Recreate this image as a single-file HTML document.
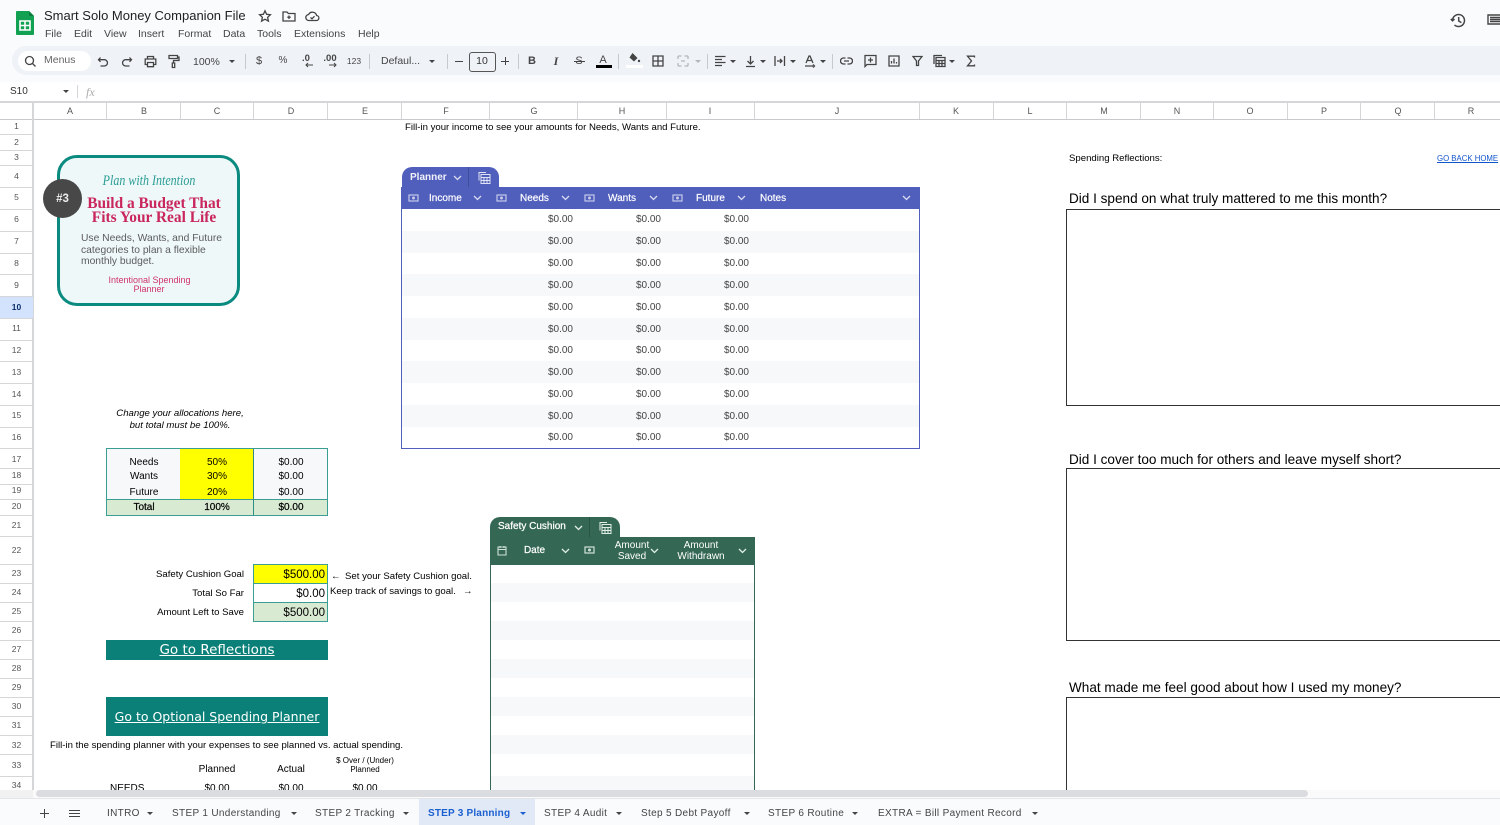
<!DOCTYPE html>
<html><head><meta charset="utf-8"><title>Smart Solo Money Companion File</title>
<style>
html,body{margin:0;padding:0;background:#fff}
body{width:1500px;height:825px;overflow:hidden;position:relative;font-family:"Liberation Sans",Arial,sans-serif;color:#000;filter:blur(.25px)}
div,span.a,svg{position:absolute}
.t{white-space:nowrap;line-height:14px;font-size:9.6px;transform:translateY(-6px)}
.c{white-space:nowrap;line-height:14px;font-size:10px;transform:translate(-50%,-6px);text-align:center}
.r{white-space:nowrap;line-height:14px;font-size:9.6px;transform:translate(-100%,-6px)}
.m{font-size:10.5px;color:#444}
.h{font-size:9px;color:#555}
.n{font-size:8.5px;color:#555;left:0;width:33px;text-align:center;line-height:12px;transform:translateY(-6px)}
.v{background:#d4d6d8;width:1px;top:103px;height:16px}
.rl{background:#d4d6d8;left:0;width:33px;height:1px}
.d{color:#444;font-size:10px}
.hd{color:#fff;font-weight:bold;font-size:10px;opacity:.92}
.sep{width:1px;height:15px;top:54px;background:#c7c9cc}
.car{width:0;height:0;border-left:3.5px solid transparent;border-right:3.5px solid transparent;border-top:3.5px solid #444}
.tb{font-size:10px;color:#444;letter-spacing:.33px}
.ic{fill:none;stroke:#444;stroke-width:1.3}
.cv{fill:none;stroke:#d8dcf0;stroke-width:1.3}
</style></head><body>

<!-- top chrome -->
<div style="left:0;top:0;width:1500px;height:82px;background:#f9fbfd"></div>
<div style="left:12px;top:46px;width:1488px;height:29px;background:#eff3f8;border-radius:14px 0 0 14px"></div>

<svg style="left:15px;top:10px" width="20" height="26" viewBox="0 0 20 26"><path d="M2 1h12l5 5v18a1 1 0 0 1-1 1H2a1 1 0 0 1-1-1V2a1 1 0 0 1 1-1z" fill="#12a152"/><path d="M14 1l5 5h-5z" fill="#0b7d3e"/><path d="M5 11h10v9H5zM5 15.5h10M10 11v9" fill="none" stroke="#fff" stroke-width="1.6"/></svg>
<div class="t" style="left:44px;top:16px;font-size:13px;line-height:16px;transform:translateY(-8px);color:#222">Smart Solo Money Companion File</div>
<svg style="left:258px;top:9px" width="14" height="14" viewBox="0 0 14 14"><path class="ic" d="M7 1.8l1.6 3.5 3.8.4-2.8 2.6.8 3.8L7 10.2l-3.4 1.9.8-3.8L1.6 5.7l3.8-.4z"/></svg>
<svg style="left:282px;top:10px" width="14" height="12" viewBox="0 0 14 12"><path class="ic" d="M1 2h4l1.3 1.5H13V11H1zM7 5.5v3.5M5.3 7.2h3.4"/></svg>
<svg style="left:305px;top:10px" width="15" height="12" viewBox="0 0 15 12"><path class="ic" d="M4 10.5a3 3 0 0 1-.4-6 4.3 4.3 0 0 1 8 1 2.5 2.5 0 0 1-.4 5zM5.5 7.5l1.5 1.3 2.5-2.6"/></svg>

<div class="t m" style="left:45px;top:33px">File</div>
<div class="t m" style="left:74px;top:33px">Edit</div>
<div class="t m" style="left:104px;top:33px">View</div>
<div class="t m" style="left:138px;top:33px">Insert</div>
<div class="t m" style="left:178px;top:33px">Format</div>
<div class="t m" style="left:223px;top:33px">Data</div>
<div class="t m" style="left:257px;top:33px">Tools</div>
<div class="t m" style="left:294px;top:33px">Extensions</div>
<div class="t m" style="left:358px;top:33px">Help</div>

<svg style="left:1450px;top:12px" width="17" height="17" viewBox="0 0 17 17"><path d="M2.5 8.5a6 6 0 1 1 2 4.5M.8 6.8l1.7 2 2-1.7M8.7 5v4l2.7 1.6" fill="none" stroke="#444" stroke-width="1.5"/></svg>
<svg style="left:1487px;top:13px" width="13" height="14" viewBox="0 0 13 14"><path d="M1 2h14v9H1zM3 4.5h10M3 6.5h10M3 8.5h10" fill="none" stroke="#444" stroke-width="1.4"/></svg>

<!-- toolbar -->
<div style="left:18px;top:51px;width:73px;height:20px;background:#fff;border-radius:10px"></div>
<svg style="left:24px;top:55px" width="13" height="13" viewBox="0 0 13 13"><path d="M5.5 1.5a4 4 0 1 0 0 8 4 4 0 0 0 0-8zM8.5 8.5l3 3" fill="none" stroke="#444" stroke-width="1.3"/></svg>
<div class="t" style="left:44px;top:59px;font-size:10.5px;color:#666">Menus</div>
<svg style="left:97px;top:56px" width="12" height="12" viewBox="0 0 12 12"><path class="ic" d="M3.5 1.5L1.5 3.7l2 2.1M1.7 3.7h5.6a3 3 0 0 1 0 6.3H3.5"/></svg>
<svg style="left:121px;top:56px" width="12" height="12" viewBox="0 0 12 12"><path class="ic" d="M8.5 1.5l2 2.2-2 2.1M10.3 3.7H4.7a3 3 0 0 0 0 6.3h3.8"/></svg>
<svg style="left:144px;top:55px" width="13" height="13" viewBox="0 0 13 13"><path class="ic" d="M3.5 4V1.5h6V4M3.5 9.5H1.2V4h10.6v5.500H9.500M3.500 7.500h6v4.200h-6z"/></svg>
<svg style="left:168px;top:54px" width="12" height="15" viewBox="0 0 12 15"><path class="ic" d="M1 1.500h8.500v3H1zM9.500 3H11v3.500H5.500V9M4.300 9h2.400v4.500H4.300z"/></svg>
<div class="t" style="left:193px;top:61px;font-size:10.5px;color:#444">100%</div>
<div class="car" style="left:229px;top:60px"></div>
<div class="sep" style="left:245px"></div>
<div class="c" style="left:259px;top:60px;font-size:11px;color:#444">$</div>
<div class="c" style="left:283px;top:60px;font-size:10px;color:#444">%</div>
<div class="c" style="left:306px;top:58px;font-size:9.5px;color:#444;font-weight:bold">.0</div>
<svg style="left:304px;top:62px" width="10" height="6" viewBox="0 0 10 6"><path d="M9 3H2M4 1L2 3l2 2" fill="none" stroke="#444" stroke-width="1"/></svg>
<div class="c" style="left:330px;top:58px;font-size:9.5px;color:#444;font-weight:bold">.00</div>
<svg style="left:328px;top:62px" width="10" height="6" viewBox="0 0 10 6"><path d="M1 3h7M6 1l2 2-2 2" fill="none" stroke="#444" stroke-width="1"/></svg>
<div class="c" style="left:354px;top:60px;font-size:8.5px;color:#444">123</div>
<div class="sep" style="left:369px"></div>
<div class="t" style="left:381px;top:60px;font-size:10.5px;color:#444">Defaul...</div>
<div class="car" style="left:429px;top:60px"></div>
<div class="sep" style="left:447px"></div>
<div style="left:455px;top:61px;width:8px;height:1px;background:#444"></div>
<div style="left:469px;top:52px;width:25px;height:18px;border:1px solid #555;border-radius:3px;box-sizing:content-box"></div>
<div class="c" style="left:482px;top:60px;font-size:10.5px;color:#333">10</div>
<div style="left:501px;top:61px;width:8px;height:1px;background:#444"></div>
<div style="left:505px;top:57px;width:1px;height:8px;background:#444"></div>
<div class="sep" style="left:518px"></div>
<div class="c" style="left:532px;top:60px;font-size:11px;font-weight:bold;color:#444">B</div>
<div class="c" style="left:556px;top:60px;font-size:12px;font-style:italic;font-family:'Liberation Serif',serif;font-weight:bold;color:#444">I</div>
<div class="c" style="left:579px;top:60px;font-size:11px;color:#444">S</div>
<div style="left:574px;top:61px;width:11px;height:1px;background:#444"></div>
<div class="c" style="left:603px;top:59px;font-size:11px;color:#444">A</div>
<div style="left:596px;top:65px;width:16px;height:3px;background:#000"></div>
<div class="sep" style="left:618px"></div>
<svg style="left:627px;top:52px" width="14" height="13" viewBox="0 0 14 13"><path d="M5.500 1l5 5-3.500 3.500L2.500 5.500z" fill="#444"/><circle cx="12" cy="9" r="1.200" fill="#444"/></svg>
<div style="left:626px;top:65px;width:17px;height:3px;background:#fff"></div>
<svg style="left:652px;top:55px" width="12" height="12" viewBox="0 0 12 12"><path class="ic" d="M1 1h10v10H1zM6 1v10M1 6h10"/></svg>
<svg style="left:677px;top:55px" width="12" height="12" viewBox="0 0 12 12"><path d="M1 1v3M1 8v3M11 1v3M11 8v3M1 1h3.500M1 11h3.500M7.500 1H11M7.500 11H11M4 6h4" fill="none" stroke="#b5b8bb" stroke-width="1.300"/></svg>
<div class="car" style="left:695px;top:60px;border-top-color:#b5b8bb"></div>
<div class="sep" style="left:707px"></div>
<svg style="left:714px;top:55px" width="12" height="12" viewBox="0 0 12 12"><path class="ic" d="M1 1.500h10.500M1 4.500h7M1 7.500h10.500M1 10.500h7"/></svg>
<div class="car" style="left:730px;top:60px"></div>
<svg style="left:745px;top:55px" width="11" height="13" viewBox="0 0 11 13"><path class="ic" d="M5.500 1v8M2.500 6l3 3 3-3M1 11.500h9"/></svg>
<div class="car" style="left:760px;top:60px"></div>
<svg style="left:774px;top:55px" width="12" height="12" viewBox="0 0 12 12"><path class="ic" d="M1 1v10M10.500 1v10M3 6h5M6 4l2 2-2 2"/></svg>
<div class="car" style="left:790px;top:60px"></div>
<svg style="left:804px;top:55px" width="12" height="13" viewBox="0 0 12 13"><path class="ic" d="M2 8l3-7h1l3 7M3.200 5.500h4.600M1 11h8M9 9.500l1.500 1.500L9 12.500"/></svg>
<div class="car" style="left:820px;top:60px"></div>
<div class="sep" style="left:832px"></div>
<svg style="left:840px;top:56px" width="13" height="10" viewBox="0 0 13 10"><path class="ic" d="M5.500 2H3.500a3 3 0 0 0 0 6h2M7.500 2h2a3 3 0 0 1 0 6h-2M4 5h5"/></svg>
<svg style="left:864px;top:54px" width="13" height="14" viewBox="0 0 13 14"><path class="ic" d="M1 1.500h11v9H3l-2 2zM6.500 3.500v5M4 6h5"/></svg>
<svg style="left:888px;top:55px" width="12" height="12" viewBox="0 0 12 12"><path class="ic" d="M1 1h10v10H1zM3.500 8.500V6M6 8.500V3.500M8.500 8.500V7"/></svg>
<svg style="left:912px;top:55px" width="11" height="12" viewBox="0 0 11 12"><path class="ic" d="M1 1.500h9L6.500 6v4.500h-2V6z"/></svg>
<svg style="left:933px;top:54px" width="13" height="14" viewBox="0 0 13 14"><path class="ic" d="M1 10V1.500h8M3 3.500h9v9H3zM3 6.500h9M6 6.500v6M9 6.500v6M3 9.500h9"/></svg>
<div class="car" style="left:949px;top:60px"></div>
<svg style="left:966px;top:55px" width="10" height="12" viewBox="0 0 10 12"><path class="ic" d="M8.500 2.500V1.200H1.500L5.500 6l-4 4.800h7V9.500" stroke-width="1.500"/></svg>

<!-- formula bar -->
<div class="t" style="left:10px;top:91px;font-size:10px;color:#333">S10</div>
<div class="car" style="left:63px;top:90px"></div>
<div style="left:77px;top:85px;width:1px;height:13px;background:#d4d6d8"></div>
<div class="t" style="left:86px;top:91px;font-size:12px;font-style:italic;color:#aaa;font-family:'Liberation Serif',serif">fx</div>

<!-- column header -->
<div style="left:0;top:101px;width:1500px;height:2px;background:#d4d6d8"></div>
<div style="left:0;top:119px;width:1500px;height:1px;background:#c7c9cc"></div>
<div style="left:32px;top:103px;width:2px;height:687px;background:#d4d6d8"></div>
<div class="v" style="left:106px"></div><div class="c h" style="left:70px;top:110px">A</div>
<div class="v" style="left:180px"></div><div class="c h" style="left:144px;top:110px">B</div>
<div class="v" style="left:253px"></div><div class="c h" style="left:217px;top:110px">C</div>
<div class="v" style="left:327px"></div><div class="c h" style="left:291px;top:110px">D</div>
<div class="v" style="left:401px"></div><div class="c h" style="left:365px;top:110px">E</div>
<div class="v" style="left:489px"></div><div class="c h" style="left:446px;top:110px">F</div>
<div class="v" style="left:577px"></div><div class="c h" style="left:534px;top:110px">G</div>
<div class="v" style="left:666px"></div><div class="c h" style="left:622px;top:110px">H</div>
<div class="v" style="left:754px"></div><div class="c h" style="left:710px;top:110px">I</div>
<div class="v" style="left:919px"></div><div class="c h" style="left:837px;top:110px">J</div>
<div class="v" style="left:993px"></div><div class="c h" style="left:956px;top:110px">K</div>
<div class="v" style="left:1066px"></div><div class="c h" style="left:1030px;top:110px">L</div>
<div class="v" style="left:1140px"></div><div class="c h" style="left:1104px;top:110px">M</div>
<div class="v" style="left:1213px"></div><div class="c h" style="left:1177px;top:110px">N</div>
<div class="v" style="left:1287px"></div><div class="c h" style="left:1250px;top:110px">O</div>
<div class="v" style="left:1360px"></div><div class="c h" style="left:1324px;top:110px">P</div>
<div class="v" style="left:1434px"></div><div class="c h" style="left:1398px;top:110px">Q</div>
<div class="c h" style="left:1471px;top:110px">R</div>

<!-- row header -->
<div style="left:0;top:296px;width:33px;height:22px;background:#d3e3fd"></div>
<div class="rl" style="top:134px"></div><div class="n" style="top:126px">1</div>
<div class="rl" style="top:150px"></div><div class="n" style="top:142px">2</div>
<div class="rl" style="top:165px"></div><div class="n" style="top:157px">3</div>
<div class="rl" style="top:187px"></div><div class="n" style="top:176px">4</div>
<div class="rl" style="top:209px"></div><div class="n" style="top:197px">5</div>
<div class="rl" style="top:231px"></div><div class="n" style="top:219px">6</div>
<div class="rl" style="top:253px"></div><div class="n" style="top:241px">7</div>
<div class="rl" style="top:274px"></div><div class="n" style="top:263px">8</div>
<div class="rl" style="top:296px"></div><div class="n" style="top:285px">9</div>
<div class="rl" style="top:318px"></div><div class="n" style="top:307px;font-weight:bold;color:#0b2f6b">10</div>
<div class="rl" style="top:340px"></div><div class="n" style="top:328px">11</div>
<div class="rl" style="top:361px"></div><div class="n" style="top:350px">12</div>
<div class="rl" style="top:383px"></div><div class="n" style="top:372px">13</div>
<div class="rl" style="top:405px"></div><div class="n" style="top:394px">14</div>
<div class="rl" style="top:427px"></div><div class="n" style="top:415px">15</div>
<div class="rl" style="top:448px"></div><div class="n" style="top:437px">16</div>
<div class="rl" style="top:468px"></div><div class="n" style="top:459px">17</div>
<div class="rl" style="top:484px"></div><div class="n" style="top:475px">18</div>
<div class="rl" style="top:499px"></div><div class="n" style="top:490px">19</div>
<div class="rl" style="top:515px"></div><div class="n" style="top:506px">20</div>
<div class="rl" style="top:536px"></div><div class="n" style="top:525px">21</div>
<div class="rl" style="top:564px"></div><div class="n" style="top:550px">22</div>
<div class="rl" style="top:583px"></div><div class="n" style="top:573px">23</div>
<div class="rl" style="top:602px"></div><div class="n" style="top:592px">24</div>
<div class="rl" style="top:621px"></div><div class="n" style="top:611px">25</div>
<div class="rl" style="top:640px"></div><div class="n" style="top:630px">26</div>
<div class="rl" style="top:659px"></div><div class="n" style="top:649px">27</div>
<div class="rl" style="top:678px"></div><div class="n" style="top:668px">28</div>
<div class="rl" style="top:697px"></div><div class="n" style="top:687px">29</div>
<div class="rl" style="top:716px"></div><div class="n" style="top:706px">30</div>
<div class="rl" style="top:735px"></div><div class="n" style="top:725px">31</div>
<div class="rl" style="top:754px"></div><div class="n" style="top:745px">32</div>
<div class="rl" style="top:776px"></div><div class="n" style="top:765px">33</div>
<div class="n" style="top:785px">34</div>

<!-- sheet text -->
<div class="t" style="left:405px;top:127px">Fill-in your income to see your amounts for Needs, Wants and Future.</div>

<!-- card -->
<div style="left:57px;top:155px;width:183px;height:151px;box-sizing:border-box;background:#eef8f9;border:3px solid #0b8a80;border-radius:20px"></div>
<div class="c" style="left:149px;top:179px;font-family:'Liberation Serif',serif;font-style:italic;font-size:12px;color:#2a9d94;transform:translate(-50%,-6px) scaleY(1.25)">Plan with Intention</div>
<div style="left:43px;top:179px;width:39px;height:39px;border-radius:50%;background:#484848"></div>
<div class="c" style="left:62.500px;top:198px;font-size:11.500px;font-weight:bold;color:#eee">#3</div>
<div class="c" style="left:154px;top:203px;font-family:'Liberation Serif',serif;font-weight:bold;font-size:15.400px;color:#c9265c">Build a Budget That</div>
<div class="c" style="left:154px;top:217px;font-family:'Liberation Serif',serif;font-weight:bold;font-size:15.400px;color:#c9265c">Fits Your Real Life</div>
<div class="t" style="left:81px;top:238px;font-size:10.300px;color:#5c5c5c">Use Needs, Wants, and Future</div>
<div class="t" style="left:81px;top:250px;font-size:10.300px;color:#5c5c5c">categories to plan a flexible</div>
<div class="t" style="left:81px;top:261px;font-size:10.300px;color:#5c5c5c">monthly budget.</div>
<div class="c" style="left:149.500px;top:279px;font-size:9px;color:#d0336a">Intentional Spending</div>
<div class="c" style="left:149px;top:288px;font-size:9px;color:#d0336a">Planner</div>

<!-- Planner table -->
<div style="left:401px;top:187px;width:519px;height:262px;box-sizing:border-box;border:1px solid #515fbc;background:#fff"></div>
<div style="left:402px;top:231px;width:517px;height:22px;background:#f6f8f9"></div>
<div style="left:402px;top:274px;width:517px;height:22px;background:#f6f8f9"></div>
<div style="left:402px;top:318px;width:517px;height:22px;background:#f6f8f9"></div>
<div style="left:402px;top:361px;width:517px;height:22px;background:#f6f8f9"></div>
<div style="left:402px;top:405px;width:517px;height:22px;background:#f6f8f9"></div>
<div style="left:402px;top:167px;width:97px;height:21px;background:#515fbc;border-radius:10px 10px 0 0"></div>
<div style="left:468px;top:167px;width:1px;height:20px;background:#414e9e"></div>
<div style="left:401px;top:187px;width:519px;height:22px;background:#515fbc"></div>
<div class="t hd" style="left:410px;top:177px">Planner</div>
<svg style="left:453px;top:175px" width="9" height="6" viewBox="0 0 9 6"><path class="cv" d="M1 1l3.500 3.500L8 1"/></svg>
<svg style="left:478px;top:171px" width="13" height="13" viewBox="0 0 13 13"><path d="M1 9.500V1.500h7M3 3.500h9v9H3zM3 6.500h9M6 6.500v6M9 6.500v6M3 9.500h9" fill="none" stroke="#dfe2f4" stroke-width="1"/></svg>
<svg style="left:408px;top:194px" width="11" height="8" viewBox="0 0 11 8"><rect x="1" y="1" width="9" height="6" fill="none" stroke="#c5cae9" stroke-width="1.200"/><circle cx="5.500" cy="4" r="1.500" fill="#c5cae9"/></svg>
<div class="t hd" style="left:429px;top:198px;font-weight:normal;opacity:1;-webkit-text-stroke:.2px #fff">Income</div>
<svg style="left:473px;top:195px" width="9" height="6" viewBox="0 0 9 6"><path class="cv" d="M1 1l3.500 3.500L8 1"/></svg>
<svg style="left:496px;top:194px" width="11" height="8" viewBox="0 0 11 8"><rect x="1" y="1" width="9" height="6" fill="none" stroke="#c5cae9" stroke-width="1.200"/><circle cx="5.500" cy="4" r="1.500" fill="#c5cae9"/></svg>
<div class="t hd" style="left:520px;top:198px;font-weight:normal;opacity:1;-webkit-text-stroke:.2px #fff">Needs</div>
<svg style="left:561px;top:195px" width="9" height="6" viewBox="0 0 9 6"><path class="cv" d="M1 1l3.500 3.500L8 1"/></svg>
<svg style="left:584px;top:194px" width="11" height="8" viewBox="0 0 11 8"><rect x="1" y="1" width="9" height="6" fill="none" stroke="#c5cae9" stroke-width="1.200"/><circle cx="5.500" cy="4" r="1.500" fill="#c5cae9"/></svg>
<div class="t hd" style="left:608px;top:198px;font-weight:normal;opacity:1;-webkit-text-stroke:.2px #fff">Wants</div>
<svg style="left:649px;top:195px" width="9" height="6" viewBox="0 0 9 6"><path class="cv" d="M1 1l3.500 3.500L8 1"/></svg>
<svg style="left:672px;top:194px" width="11" height="8" viewBox="0 0 11 8"><rect x="1" y="1" width="9" height="6" fill="none" stroke="#c5cae9" stroke-width="1.200"/><circle cx="5.500" cy="4" r="1.500" fill="#c5cae9"/></svg>
<div class="t hd" style="left:696px;top:198px;font-weight:normal;opacity:1;-webkit-text-stroke:.2px #fff">Future</div>
<svg style="left:737px;top:195px" width="9" height="6" viewBox="0 0 9 6"><path class="cv" d="M1 1l3.500 3.500L8 1"/></svg>
<div class="t hd" style="left:760px;top:198px;font-weight:normal;opacity:1;-webkit-text-stroke:.2px #fff">Notes</div>
<svg style="left:902px;top:195px" width="9" height="6" viewBox="0 0 9 6"><path class="cv" d="M1 1l3.500 3.500L8 1"/></svg>

<div class="r d" style="left:573px;top:219px">$0.00</div><div class="r d" style="left:661px;top:219px">$0.00</div><div class="r d" style="left:749px;top:219px">$0.00</div>
<div class="r d" style="left:573px;top:241px">$0.00</div><div class="r d" style="left:661px;top:241px">$0.00</div><div class="r d" style="left:749px;top:241px">$0.00</div>
<div class="r d" style="left:573px;top:263px">$0.00</div><div class="r d" style="left:661px;top:263px">$0.00</div><div class="r d" style="left:749px;top:263px">$0.00</div>
<div class="r d" style="left:573px;top:285px">$0.00</div><div class="r d" style="left:661px;top:285px">$0.00</div><div class="r d" style="left:749px;top:285px">$0.00</div>
<div class="r d" style="left:573px;top:307px">$0.00</div><div class="r d" style="left:661px;top:307px">$0.00</div><div class="r d" style="left:749px;top:307px">$0.00</div>
<div class="r d" style="left:573px;top:329px">$0.00</div><div class="r d" style="left:661px;top:329px">$0.00</div><div class="r d" style="left:749px;top:329px">$0.00</div>
<div class="r d" style="left:573px;top:350px">$0.00</div><div class="r d" style="left:661px;top:350px">$0.00</div><div class="r d" style="left:749px;top:350px">$0.00</div>
<div class="r d" style="left:573px;top:372px">$0.00</div><div class="r d" style="left:661px;top:372px">$0.00</div><div class="r d" style="left:749px;top:372px">$0.00</div>
<div class="r d" style="left:573px;top:394px">$0.00</div><div class="r d" style="left:661px;top:394px">$0.00</div><div class="r d" style="left:749px;top:394px">$0.00</div>
<div class="r d" style="left:573px;top:416px">$0.00</div><div class="r d" style="left:661px;top:416px">$0.00</div><div class="r d" style="left:749px;top:416px">$0.00</div>
<div class="r d" style="left:573px;top:437px">$0.00</div><div class="r d" style="left:661px;top:437px">$0.00</div><div class="r d" style="left:749px;top:437px">$0.00</div>

<!-- Allocation -->
<div class="c" style="left:180px;top:413px;font-style:italic;font-size:9.6px">Change your allocations here,</div>
<div class="c" style="left:180px;top:425px;font-style:italic;font-size:9.6px">but total must be 100%.</div>
<div style="left:106px;top:448px;width:222px;height:68px;box-sizing:border-box;border:1px solid #3a9e93;background:#f6f8fa"></div>
<div style="left:180px;top:449px;width:73px;height:50px;background:#ffff00"></div>
<div style="left:107px;top:500px;width:220px;height:15px;background:#d9ead3"></div>
<div style="left:107px;top:499px;width:220px;height:1px;background:#3a9e93"></div>
<div style="left:253px;top:449px;width:1px;height:66px;background:#2f8d83"></div>
<div class="c" style="left:144px;top:462px">Needs</div><div class="c" style="left:217px;top:462px">50%</div><div class="c" style="left:291px;top:462px">$0.00</div>
<div class="c" style="left:144px;top:476px">Wants</div><div class="c" style="left:217px;top:476px">30%</div><div class="c" style="left:291px;top:476px">$0.00</div>
<div class="c" style="left:144px;top:492px">Future</div><div class="c" style="left:217px;top:492px">20%</div><div class="c" style="left:291px;top:492px">$0.00</div>
<div class="c" style="left:144px;top:507px;-webkit-text-stroke:.2px #000">Total</div><div class="c" style="left:217px;top:507px;-webkit-text-stroke:.2px #000">100%</div><div class="c" style="left:291px;top:507px;-webkit-text-stroke:.2px #000">$0.00</div>

<!-- Safety goal -->
<div style="left:253px;top:564px;width:75px;height:58px;box-sizing:border-box;border:1px solid #3a9e93;background:#fff"></div>
<div style="left:254px;top:565px;width:73px;height:18px;background:#ffff00"></div>
<div style="left:254px;top:583px;width:73px;height:1px;background:#3a9e93"></div>
<div style="left:254px;top:602px;width:73px;height:1px;background:#3a9e93"></div>
<div style="left:254px;top:603px;width:73px;height:18px;background:#d9ead3"></div>
<div class="r" style="left:244px;top:574px">Safety Cushion Goal</div>
<div class="r" style="left:244px;top:593px">Total So Far</div>
<div class="r" style="left:244px;top:612px">Amount Left to Save</div>
<div class="r" style="left:325px;top:574px;font-size:11.5px">$500.00</div>
<div class="r" style="left:325px;top:593px;font-size:11.5px">$0.00</div>
<div class="r" style="left:325px;top:612px;font-size:11.5px">$500.00</div>
<div class="t" style="left:331px;top:576px">&#8592;</div>
<div class="t" style="left:345px;top:576px">Set your Safety Cushion goal.</div>
<div class="t" style="left:330px;top:591px">Keep track of savings to goal.</div>
<div class="t" style="left:463px;top:591px">&#8594;</div>

<!-- Safety Cushion table -->
<div style="left:490px;top:537px;width:265px;height:253px;box-sizing:border-box;border-left:1px solid #356854;border-right:1px solid #356854;background:#fff"></div>
<div style="left:491px;top:583px;width:263px;height:19px;background:#f6f8f9"></div>
<div style="left:491px;top:621px;width:263px;height:19px;background:#f6f8f9"></div>
<div style="left:491px;top:659px;width:263px;height:19px;background:#f6f8f9"></div>
<div style="left:491px;top:697px;width:263px;height:19px;background:#f6f8f9"></div>
<div style="left:491px;top:735px;width:263px;height:19px;background:#f6f8f9"></div>
<div style="left:491px;top:776px;width:263px;height:14px;background:#f6f8f9"></div>
<div style="left:490px;top:517px;width:130px;height:21px;background:#356854;border-radius:10px 10px 0 0"></div>
<div style="left:589px;top:517px;width:1px;height:20px;background:#2a5544"></div>
<div style="left:490px;top:537px;width:265px;height:28px;background:#356854"></div>
<div class="t hd" style="left:498px;top:526px;font-weight:normal;opacity:1;-webkit-text-stroke:.25px #fff">Safety Cushion</div>
<svg style="left:574px;top:525px" width="9" height="6" viewBox="0 0 9 6"><path d="M1 1l3.500 3.500L8 1" fill="none" stroke="#dfeee7" stroke-width="1.300"/></svg>
<svg style="left:599px;top:521px" width="13" height="13" viewBox="0 0 13 13"><path d="M1 9.500V1.500h7M3 3.500h9v9H3zM3 6.500h9M6 6.500v6M9 6.500v6M3 9.500h9" fill="none" stroke="#e2efe9" stroke-width="1"/></svg>
<svg style="left:497px;top:545px" width="10" height="11" viewBox="0 0 10 11"><path d="M1 2h8v8H1zM1 4.500h8M3 1v2M7 1v2" fill="none" stroke="#cfe0d8" stroke-width="1.100"/></svg>
<div class="c" style="left:534.500px;top:550px;color:#fff;-webkit-text-stroke:.2px #fff">Date</div>
<svg style="left:561px;top:548px" width="9" height="6" viewBox="0 0 9 6"><path d="M1 1l3.500 3.500L8 1" fill="none" stroke="#dfeee7" stroke-width="1.300"/></svg>
<svg style="left:584px;top:546px" width="11" height="8" viewBox="0 0 11 8"><rect x="1" y="1" width="9" height="6" fill="none" stroke="#cfe0d8" stroke-width="1.200"/><circle cx="5.500" cy="4" r="1.500" fill="#cfe0d8"/></svg>
<div class="c" style="left:632px;top:545px;color:#fff">Amount</div>
<div class="c" style="left:632px;top:556px;color:#fff">Saved</div>
<svg style="left:650px;top:548px" width="9" height="6" viewBox="0 0 9 6"><path d="M1 1l3.500 3.500L8 1" fill="none" stroke="#dfeee7" stroke-width="1.300"/></svg>
<div class="c" style="left:701px;top:545px;color:#fff">Amount</div>
<div class="c" style="left:701px;top:556px;color:#fff">Withdrawn</div>
<svg style="left:738px;top:548px" width="9" height="6" viewBox="0 0 9 6"><path d="M1 1l3.500 3.500L8 1" fill="none" stroke="#dfeee7" stroke-width="1.300"/></svg>

<!-- Buttons -->
<div style="left:106px;top:640px;width:222px;height:20px;background:#0b8078"></div>
<div class="c" style="left:217px;top:649px;font-family:'DejaVu Sans',sans-serif;font-size:13.500px;color:#fff;text-decoration:underline">Go to Reflections</div>
<div style="left:106px;top:697px;width:222px;height:39px;background:#0b8078"></div>
<div class="c" style="left:217px;top:716px;font-family:'DejaVu Sans',sans-serif;font-size:12.500px;color:#fff;text-decoration:underline">Go to Optional Spending Planner</div>

<div class="t" style="left:50px;top:745px">Fill-in the spending planner with your expenses to see planned vs. actual spending.</div>
<div class="c" style="left:217px;top:769px">Planned</div>
<div class="c" style="left:291px;top:769px">Actual</div>
<div class="c" style="left:365px;top:760px;font-size:8px">$ Over / (Under)</div>
<div class="c" style="left:365px;top:769px;font-size:8px">Planned</div>
<div class="t" style="left:110px;top:788px;font-size:10px">NEEDS</div>
<div class="c" style="left:217px;top:788px">$0.00</div>
<div class="c" style="left:291px;top:788px">$0.00</div>
<div class="c" style="left:365px;top:788px">$0.00</div>

<!-- Right column -->
<div class="t" style="left:1069px;top:158px">Spending Reflections:</div>
<div class="t" style="left:1437px;top:158px;font-size:7.800px;color:#1155cc;text-decoration:underline">GO BACK HOME</div>
<div class="t" style="left:1069px;top:198px;font-size:13.570px">Did I spend on what truly mattered to me this month?</div>
<div style="left:1066px;top:209px;width:460px;height:197px;box-sizing:border-box;border:1px solid #333"></div>
<div class="t" style="left:1069px;top:459px;font-size:13.570px">Did I cover too much for others and leave myself short?</div>
<div style="left:1066px;top:468px;width:460px;height:173px;box-sizing:border-box;border:1px solid #333"></div>
<div class="t" style="left:1069px;top:687px;font-size:13.570px">What made me feel good about how I used my money?</div>
<div style="left:1066px;top:697px;width:460px;height:120px;box-sizing:border-box;border:1px solid #333"></div>

<!-- scrollbar & tabs -->
<div style="left:0;top:790px;width:1500px;height:8px;background:#fafafa"></div>
<div style="left:0;top:790px;width:33px;height:8px;background:#f1f1f1"></div>
<div style="left:36px;top:790px;width:1272px;height:7px;background:#dadce0;border-radius:4px"></div>
<div style="left:0;top:798px;width:1500px;height:27px;background:#f9fbfd;border-top:1px solid #e3e5e8;box-sizing:border-box"></div>
<div style="left:419px;top:799px;width:116px;height:26px;background:#e1e9f7"></div>

<div style="left:40px;top:813px;width:9px;height:1.300px;background:#444"></div>
<div style="left:44px;top:808.500px;width:1.300px;height:9px;background:#444"></div>
<div style="left:69px;top:810px;width:11px;height:1px;background:#444"></div>
<div style="left:69px;top:813px;width:11px;height:1px;background:#444"></div>
<div style="left:69px;top:816px;width:11px;height:1px;background:#444"></div>

<div class="t tb" style="left:107px;top:813px">INTRO</div><div class="car" style="left:147px;top:812px"></div>
<div class="t tb" style="left:172px;top:813px">STEP 1 Understanding</div><div class="car" style="left:291px;top:812px"></div>
<div class="t tb" style="left:315px;top:813px">STEP 2 Tracking</div><div class="car" style="left:403px;top:812px"></div>
<div class="t tb" style="left:428px;top:813px;color:#1a5fd0;font-weight:bold;letter-spacing:.2px">STEP 3 Planning</div><div class="car" style="left:520px;top:812px;border-top-color:#1a5fd0"></div>
<div class="t tb" style="left:544px;top:813px">STEP 4 Audit</div><div class="car" style="left:616px;top:812px"></div>
<div class="t tb" style="left:641px;top:813px">Step 5 Debt Payoff</div><div class="car" style="left:744px;top:812px"></div>
<div class="t tb" style="left:768px;top:813px">STEP 6 Routine</div><div class="car" style="left:852px;top:812px"></div>
<div class="t tb" style="left:878px;top:813px">EXTRA = Bill Payment Record</div><div class="car" style="left:1032px;top:812px"></div>

</body></html>
